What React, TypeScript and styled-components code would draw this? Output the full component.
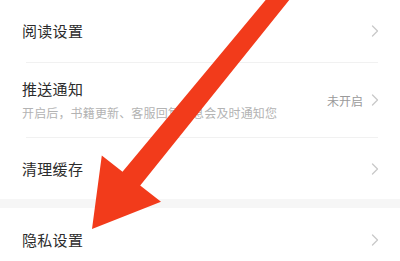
import * as React from 'react';
import styled, {createGlobalStyle} from 'styled-components';

const Global = createGlobalStyle`
  html, body {
    margin: 0;
    padding: 0;
    background: #ffffff;
  }
  body {
    font-family: "Noto Sans CJK SC", "Noto Sans", sans-serif;
    -webkit-font-smoothing: antialiased;
  }
`;

const Screen = styled.div`
  position: relative;
  width: 400px;
  height: 261px;
  overflow: hidden;
  background: #ffffff;
`;

const Group = styled.div`
  display: flex;
  flex-direction: column;
`;

const Row = styled.div<{height: number}>`
  display: flex;
  align-items: center;
  height: ${({height}) => height}px;
  padding: 0 21px 0 22px;
  box-sizing: border-box;
`;

const Divider = styled.div`
  height: 1px;
  margin: 0 22px 0 26px;
  background: #f1f1f1;
`;

const SectionGap = styled.div`
  height: 9px;
  background: #f6f6f6;
`;

const Texts = styled.div`
  flex: 1;
  display: flex;
  flex-direction: column;
  gap: 6px;
`;

const Title = styled.span`
  font-size: 15px;
  line-height: 20px;
  color: #2c2c2c;
  letter-spacing: 0.3px;
`;

const Subtitle = styled.span`
  font-size: 12px;
  line-height: 16px;
  color: #b3b3b3;
  letter-spacing: 0.15px;
`;

const Value = styled.span`
  font-size: 12px;
  color: #9a9a9a;
  margin-right: 8px;
`;

const Chevron = () => (
  <svg width="8" height="12" viewBox="0 0 8 12" fill="none">
    <path
      d="M1.5 1 L6.5 6 L1.5 11"
      stroke="#c9c9c9"
      strokeWidth="1.3"
      strokeLinecap="round"
      strokeLinejoin="round"
    />
  </svg>
);

const ArrowLayer = styled.svg`
  position: absolute;
  left: 0;
  top: 0;
  pointer-events: none;
`;

// red pointer drawn on top of the list, tip at (92,229)
const Arrow = () => (
  <ArrowLayer width="400" height="261" viewBox="0 0 400 261">
    <polygon
      fill="#f23b1b"
      points="92,229 101.8,155.5 122.5,171.7 314,-58 327,-47 140.2,185.5 161,201.7"
    />
  </ArrowLayer>
);

export default function App() {
  return (
    <>
      <Global />
      <Screen>
        <Group>
          <Row height={62}>
            <Texts>
              <Title>阅读设置</Title>
            </Texts>
            <Chevron />
          </Row>
          <Divider />
          <Row height={74}>
            <Texts>
              <Title>推送通知</Title>
              <Subtitle>开启后，书籍更新、客服回复消息会及时通知您</Subtitle>
            </Texts>
            <Value>未开启</Value>
            <Chevron />
          </Row>
          <Divider />
          <Row height={61}>
            <Texts>
              <Title>清理缓存</Title>
            </Texts>
            <Chevron />
          </Row>
        </Group>
        <SectionGap />
        <Group>
          <Row height={64}>
            <Texts>
              <Title>隐私设置</Title>
            </Texts>
            <Chevron />
          </Row>
        </Group>
        <Arrow />
      </Screen>
    </>
  );
}
